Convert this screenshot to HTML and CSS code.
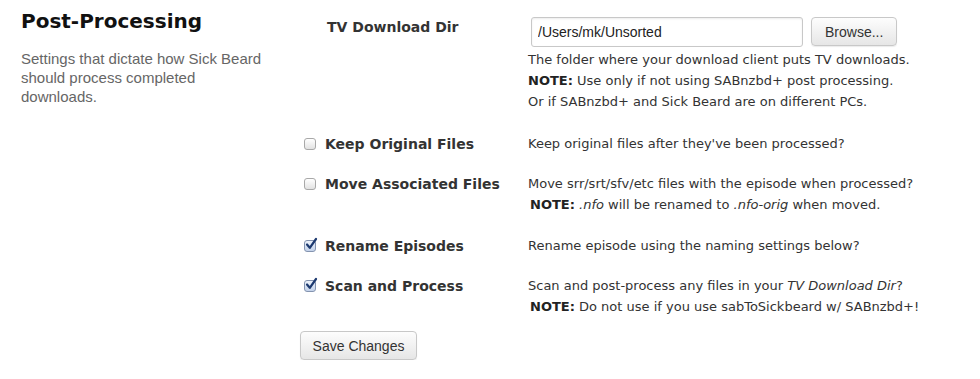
FILE: index.html
```html
<!DOCTYPE html>
<html lang="en">
<head>
  <meta charset="UTF-8" />
  <title>Post-Processing</title>
  <link rel="stylesheet" href="styles.css">
</head>
<body>

  <div id="config">
    <div id="section-info">
      <h2>Post-Processing</h2>
      <p>Settings that dictate how Sick Beard should process completed downloads.</p>
    </div>

    <div id="section-body">
      <div class="field">
        <label class="field-label text-label" for="tv_download_dir">TV Download Dir</label>
        <div class="field-value">
          <div class="dir-row">
            <input type="text" id="tv_download_dir" value="/Users/mk/Unsorted">
            <button class="btn">Browse...</button>
          </div>
          <div class="line">The folder where your download client puts TV downloads.</div>
          <div class="line"><b>NOTE:</b> Use only if not using SABnzbd+ post processing.</div>
          <div class="line">Or if SABnzbd+ and Sick Beard are on different PCs.</div>
        </div>
      </div>

      <div class="field">
        <label class="field-label"><span class="check"></span>Keep Original Files</label>
        <div class="field-value">
          <div class="line">Keep original files after they've been processed?</div>
        </div>
      </div>

      <div class="field">
        <label class="field-label"><span class="check"></span>Move Associated Files</label>
        <div class="field-value">
          <div class="line">Move srr/srt/sfv/etc files with the episode when processed?</div>
          <div class="line note"><b>NOTE:</b> <i>.nfo</i> will be renamed to <i>.nfo-orig</i> when moved.</div>
        </div>
      </div>

      <div class="field">
        <label class="field-label"><span class="check checked"><svg width="14" height="14" viewBox="0 0 14 14"><path d="M3 7.5 L5.8 10.8 L12 2" fill="none" stroke="#1d3a70" stroke-width="2.2" stroke-linecap="round" stroke-linejoin="round"/></svg></span>Rename Episodes</label>
        <div class="field-value">
          <div class="line">Rename episode using the naming settings below?</div>
        </div>
      </div>

      <div class="field">
        <label class="field-label"><span class="check checked"><svg width="14" height="14" viewBox="0 0 14 14"><path d="M3 7.5 L5.8 10.8 L12 2" fill="none" stroke="#1d3a70" stroke-width="2.2" stroke-linecap="round" stroke-linejoin="round"/></svg></span>Scan and Process</label>
        <div class="field-value">
          <div class="line">Scan and post-process any files in your <i>TV Download Dir</i>?</div>
          <div class="line note"><b>NOTE:</b> Do not use if you use sabToSickbeard w/ SABnzbd+!</div>
        </div>
      </div>

      <button class="btn save">Save Changes</button>
    </div>
  </div>

</body>
</html>
```

FILE: styles.css
```css
* { box-sizing: border-box; }
body, html {
  margin: 0; padding: 0;
  background: #fff;
  font-family: "DejaVu Sans", Verdana, sans-serif;
  color: #333;
}
#config {
  display: flex;
  padding: 8px 0 0 21px;
}
#section-info {
  width: 279px;
  flex-shrink: 0;
}
#section-info h2 {
  margin: 0;
  font-size: 20px;
  line-height: 26px;
  color: #111;
}
#section-info p {
  margin: 15px 0 0;
  width: 244px;
  font-family: "Liberation Sans", Arial, sans-serif;
  font-size: 15px;
  line-height: 19px;
  color: #666;
}
#section-body {
  padding-top: 9px;
}
.field {
  display: flex;
  margin-bottom: 19px;
}
.field:first-child { margin-bottom: 21px; }
.field-label {
  width: 228px;
  flex-shrink: 0;
  display: flex;
  align-items: center;
  height: 21px;
  padding-left: 4px;
  font-size: 14px;
  font-weight: bold;
  color: #333;
}
.text-label {
  padding-left: 27px;
  height: 20px;
}
.check {
  position: relative;
  width: 12px;
  height: 12px;
  margin-right: 9px;
  border: 1px solid #a8a8a8;
  border-radius: 3px;
  background: linear-gradient(#fff, #e2e2e2);
  flex-shrink: 0;
}
.check.checked {
  border-color: #8494b0;
  background: linear-gradient(#eef3fb, #c3d2ea);
}
.check svg {
  position: absolute;
  left: -1px;
  top: -4px;
}
.field-value {
  font-size: 13px;
  line-height: 21px;
  color: #333;
}
.line b { color: #222; }
.note {
  padding-left: 2px;
  line-height: 22px;
}
.dir-row {
  display: flex;
  gap: 8px;
  margin-bottom: 2px;
}
.dir-row input {
  width: 272px;
  height: 30px;
  margin: 0 0 0 3px;
  padding: 0 6px;
  border: 1px solid #c8c8c8;
  border-radius: 3px;
  box-shadow: inset 0 1px 2px rgba(0,0,0,0.08);
  font-family: "Liberation Sans", Arial, sans-serif;
  font-size: 14px;
  color: #222;
}
.btn {
  height: 29px;
  padding: 0 13px;
  border: 1px solid #c8c8c8;
  border-radius: 4px;
  background: linear-gradient(#fdfdfd, #e6e6e6);
  box-shadow: 0 1px 1px rgba(0,0,0,0.08);
  font-family: "Liberation Sans", Arial, sans-serif;
  font-size: 14px;
  color: #333;
  white-space: nowrap;
  cursor: pointer;
}
.save {
  display: block;
  width: 117px;
  padding: 0;
  margin-top: -6px;
}
```
